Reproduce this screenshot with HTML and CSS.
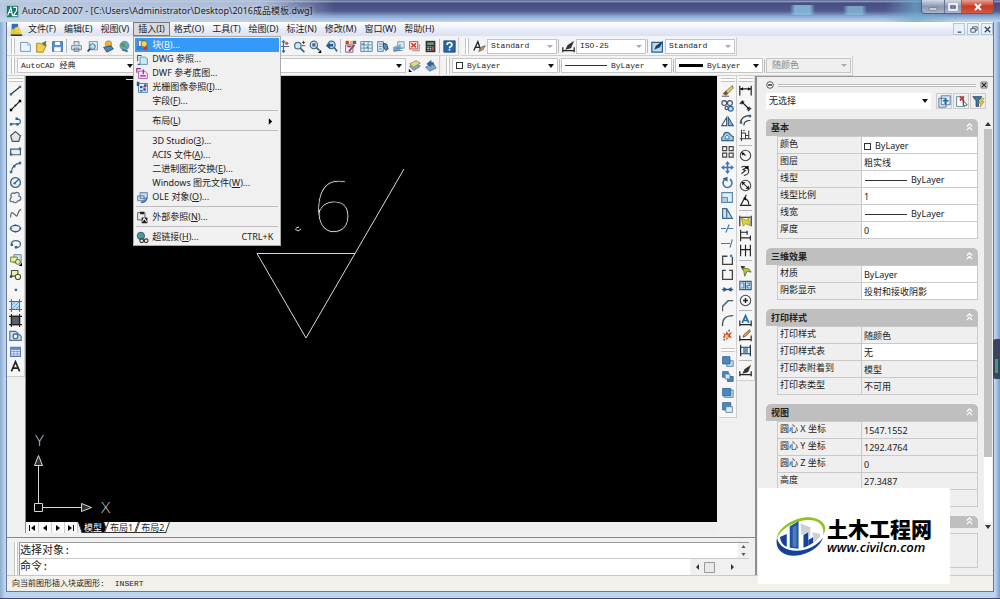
FILE: index.html
```
<!DOCTYPE html>
<html lang="zh-CN">
<head>
<meta charset="utf-8">
<title>AutoCAD 2007</title>
<link rel="stylesheet" href="styles.css">
</head>
<body>
<svg class="defs" aria-hidden="true">
  <symbol id="app" viewBox="0 0 16 16"><path fill="#177a68" d="M1 1h14v14H1z"/><path stroke="#fff" stroke-width="1.4" fill="none" d="M2 13 6 3l2 10M3 9h5M9 3h4v4l-4 6h5"/></symbol>
  <symbol id="dwg" viewBox="0 0 16 16"><path fill="#2f6fc0" d="M2 1h8v7H2z"/><path fill="#f0c62c" d="M1 8h8l6 7H1z"/><path fill="#f3d24a" d="m5 6 6-2 4 9-7-2z"/><path fill="#245" d="M1 14h14v2H1z"/></symbol>
  <symbol id="new" viewBox="0 0 16 16"><path fill="#e9f4fd" stroke="#5b87ad" d="M2 3h9l3 3v8H2z"/><path fill="#a9c9e4" d="M10 3v4h4z"/></symbol>
  <symbol id="open" viewBox="0 0 16 16"><path fill="#f3cf4a" stroke="#9a7b1c" d="M2 4h5l2 2h5l-4 9H2z"/><path fill="#3f8a42" d="m8 4 6-3-1 7z"/></symbol>
  <symbol id="save" viewBox="0 0 16 16"><path fill="#5b93cc" stroke="#2d5d92" d="M2 2h12v12H2z"/><path fill="#fff" d="M5 2h6v4H5zM4 9h8v5H4z"/></symbol>
  <symbol id="print" viewBox="0 0 16 16"><path fill="#dce5ee" stroke="#5b6f88" d="M5 6V2h6v4M2 7h12v5H2zM5 10h6v4H5z"/></symbol>
  <symbol id="preview" viewBox="0 0 16 16"><path fill="#eaf4fb" stroke="#557d9c" d="M4 2h10v10H4z"/><circle cx="8" cy="8" r="3.5" fill="#b8dcf2" stroke="#357"/><path stroke="#335" stroke-width="2" d="m5 11-3 3"/></symbol>
  <symbol id="publish" viewBox="0 0 16 16"><circle cx="8" cy="5" r="4" fill="#f0b32a" stroke="#996"/><path fill="#4b86bf" stroke="#345" d="m2 9 9-2 3 4-8 4z"/></symbol>
  <symbol id="globe" viewBox="0 0 16 16"><circle cx="8" cy="7" r="5.5" fill="#5fa9d8" stroke="#6a8296"/><path fill="#4f9d57" d="m5 3 4 1v4l-4 1-2-3zM9 9l3-2-1 4z"/><path stroke="#667" stroke-width="2" d="m5 12 7 2"/></symbol>
  <symbol id="block" viewBox="0 0 16 16"><path fill="#fff" stroke="#567" d="M3 2h8v7H3z"/><circle cx="10" cy="6" r="4" fill="#ecd85d" stroke="#555"/><path fill="#c93e2c" d="m7 13 7-5v6z"/><path fill="#2a7fbe" d="M1 9h6v4H1z"/></symbol>
  <symbol id="xref" viewBox="0 0 16 16"><path fill="#cfe8f7" stroke="#5283ab" d="M5 5h6l3 2v7H5z"/><path stroke="#24618f" stroke-width="1.3" fill="none" d="M2 10V3h5M2 14h3"/></symbol>
  <symbol id="dwf" viewBox="0 0 16 16"><path fill="#f7dcf1" stroke="#9c4b9e" d="M3 5h8l3 3v6H3z"/><path stroke="#7b308b" stroke-width="1.4" fill="none" d="M1 7V2h5M5 11h7M9 3v6"/></symbol>
  <symbol id="raster" viewBox="0 0 16 16"><path fill="#e8eff9" stroke="#3564a0" d="M3 3h11v11H3z"/><path fill="#2454a0" d="M1 1h3v5H1zM5 6h3v3H5zM9 9h3v3H9zM10 4h3v3h-3zM5 11h3v2H5z"/><path fill="#c03c32" d="M9 6h3v2H9z"/></symbol>
  <symbol id="ole" viewBox="0 0 16 16"><path fill="#c9ddec" stroke="#4b6f91" d="M5 2h9v7H5zM2 6h8v6H2z"/><path stroke="#3372a8" stroke-width="2" fill="none" d="M6 14c5 0 7-3 7-6"/></symbol>
  <symbol id="extref" viewBox="0 0 16 16"><path fill="#e7edf0" stroke="#444" d="M2 2h9v9H2z"/><path fill="#222" d="M5 1h5v3H5zM7 8h7v7H7z"/><path stroke="#fff" stroke-width="1.3" d="m8 13 2-4 3 4"/></symbol>
  <symbol id="link" viewBox="0 0 16 16"><circle cx="6" cy="6" r="4.5" fill="#4b9a9a" stroke="#246"/><circle cx="7" cy="12" r="2.3" fill="#eee" stroke="#333" stroke-width="1.4"/><circle cx="12.500" cy="12" r="2.3" fill="#eee" stroke="#333" stroke-width="1.4"/></symbol>
  <symbol id="pan" viewBox="0 0 16 16"><path stroke="#3c6c9d" stroke-width="1.5" fill="none" d="M8 1v14M1 8h14M6 3l2-2 2 2M6 13l2 2 2-2"/><circle cx="12" cy="4" r="2" fill="#d05d49"/></symbol>
  <symbol id="zoomrt" viewBox="0 0 16 16"><circle cx="6" cy="7" r="4" fill="#cfe8f6" stroke="#4c6f8c" stroke-width="1.5"/><path stroke="#4a5f78" stroke-width="2" d="m9 10 5 5"/><path stroke="#333" d="M11 3h4M13 1v4M11 7h4"/></symbol>
  <symbol id="zoomwin" viewBox="0 0 16 16"><circle cx="6" cy="6" r="4.5" fill="#cfe8f6" stroke="#4c6f8c" stroke-width="1.5"/><path fill="#486a8b" d="M4 4h4v4H4z"/><path stroke="#4a5f78" stroke-width="2" d="m9 9 4 4"/><path d="M15 12v4h-4z"/></symbol>
  <symbol id="zoomprev" viewBox="0 0 16 16"><circle cx="8" cy="6" r="4.5" fill="#b9d9ee" stroke="#4c6f8c" stroke-width="1.5"/><path stroke="#4a5f78" stroke-width="2" d="m11 9 4 5"/><path fill="#1f5b94" d="M1 7 6 3v2h4v3H6v3z"/></symbol>
  <symbol id="props" viewBox="0 0 16 16"><path fill="#d33" d="M2 1h4v4H2z"/><path fill="#e8c62a" d="M7 1h4v4H7z"/><path fill="#36a" d="M11 1h4v4h-4z"/><path fill="#f2f2fa" stroke="#557" d="M2 6h9v9H2z"/><path stroke="#a3355b" stroke-width="2" d="m6 14 7-8M4 8h5"/></symbol>
  <symbol id="grid" viewBox="0 0 16 16"><path fill="#e7f3fa" stroke="#496d8c" d="M1 2h14v12H1z"/><path stroke="#5186ad" fill="none" d="M5 2v12M10 2v12M1 6h14M1 10h14"/><path fill="#397" d="M3 4h2v2H3zM8 8h2v2H8z"/></symbol>
  <symbol id="palette" viewBox="0 0 16 16"><path fill="#d7e9f6" stroke="#3f6b93" d="M2 2h7v12H2z"/><path stroke="#3f6b93" d="M4 5h3M4 8h3M4 11h3"/><path fill="#578fbe" stroke="#234" d="m9 4 4 1 2 6-3 2-3-5z"/></symbol>
  <symbol id="sheets" viewBox="0 0 16 16"><path fill="#d7e5ee" stroke="#7692a6" d="M7 2h8v8H7z"/><path fill="#82aac8" d="m1 9 10-4-1 8-8 2z"/><path stroke="#4d7ea5" d="M2 13h11M4 10h9"/></symbol>
  <symbol id="markup" viewBox="0 0 16 16"><path fill="#fff" stroke="#d26464" stroke-width="1.5" d="M2 2h10v9H2z"/><path stroke="#cf3434" stroke-width="2" d="m4 4 6 5M10 4 4 9"/><path fill="none" stroke="#c99" stroke-width="1.5" d="M5 13h9V5"/></symbol>
  <symbol id="calc" viewBox="0 0 16 16"><path fill="#30343a" d="M2 1h12v14H2z"/><path fill="#5fae72" d="M4 3h8v3H4z"/><path fill="#eee" d="M4 8h2v1H4zM7 8h2v1H7zM4 10h2v1H4zM7 10h2v1H7zM4 12h2v1H4zM7 12h2v1H7z"/><path fill="#d55" d="M10 8h2v5h-2z"/></symbol>
  <symbol id="help" viewBox="0 0 16 16"><path fill="#2d669e" stroke="#1c4672" d="M1 1h14v14H1z"/><path fill="none" stroke="#fff" stroke-width="2" d="M5 6c0-4 6-4 6 0 0 2-3 2-3 4M8 11v2"/></symbol>
  <symbol id="textstyle" viewBox="0 0 16 16"><path stroke="#222" stroke-width="1.6" fill="none" d="M1 13 6 2l3 9M3 9h5"/><path fill="#c9a14c" stroke="#654" d="m7 14 3-5 5-2-3 5z"/></symbol>
  <symbol id="dimstyle" viewBox="0 0 16 16"><path stroke="#222" stroke-width="1.5" fill="none" d="M1 9v6M15 9v6M1 13h14"/><path fill="#333" d="m4 12 3-6 8-5-4 9z"/></symbol>
  <symbol id="tblstyle" viewBox="0 0 16 16"><path fill="#bcd9f0" stroke="#27639b" stroke-width="1.5" d="M1 3h13v12H1z"/><path fill="#28415c" d="m4 12 2-5 9-6-4 8z"/></symbol>
  <symbol id="layers" viewBox="0 0 16 16"><path fill="#89aac6" stroke="#568" d="m2 9 8-4 5 4-8 5z"/><path fill="#e3dc76" stroke="#886" d="m2 6 8-4 5 3-8 5z"/><path d="M1 12v4h4z"/></symbol>
  <symbol id="layerprev" viewBox="0 0 16 16"><path fill="#86a9c6" stroke="#456f92" d="m2 10 9-5 4 6-8 4z"/><path fill="#2e6293" d="M3 6 9 1v3h3v5c-2-3-3-2-3-2v3z"/></symbol>

  <symbol id="line" viewBox="0 0 16 16"><path stroke="#333" stroke-width="1.4" d="M3 12 13 4"/><path fill="#2d6d9d" d="M1 11h3v3H1zM12 2h3v3h-3z"/></symbol>
  <symbol id="xline" viewBox="0 0 16 16"><path stroke="#222" stroke-width="1.6" d="M2 14 14 2"/><path d="M1 12h3v3H1zM12 1h3v3h-3zM7 7h2v2H7z"/></symbol>
  <symbol id="pline" viewBox="0 0 16 16"><path stroke="#3c6785" stroke-width="1.4" fill="none" d="M2 11h9c4 0 4-6 0-6H9"/><path fill="#225f94" d="M1 10h3v3H1zM9 10h3v3H9zM8 3h3v3H8z"/></symbol>
  <symbol id="polygon" viewBox="0 0 16 16"><path fill="#dce6ec" stroke="#4b545c" stroke-width="1.5" d="m8 2 6 5-2 7H4L2 7z"/></symbol>
  <symbol id="rect" viewBox="0 0 16 16"><path fill="#e8eff3" stroke="#4b6070" stroke-width="1.5" d="M2 5h12v7H2z"/><path fill="#2e6d9d" d="M12 3h3v3h-3zM1 10h3v3H1z"/></symbol>
  <symbol id="arc" viewBox="0 0 16 16"><path stroke="#456" stroke-width="1.4" fill="none" d="M3 14C3 7 8 3 14 3"/><path fill="#2e6d9d" d="M1 12h3v3H1zM5 5h3v3H5zM12 1h3v3h-3z"/></symbol>
  <symbol id="circle" viewBox="0 0 16 16"><circle cx="8" cy="8" r="6" fill="#edf3f7" stroke="#455f73" stroke-width="1.6"/><path stroke="#27699e" stroke-width="1.6" d="m7 9 5-5"/><circle cx="7" cy="9" r="1.600" fill="#3777aa"/></symbol>
  <symbol id="cloud" viewBox="0 0 16 16"><path fill="#edf3f7" stroke="#54697a" stroke-width="1.4" d="M5 13c-4 1-5-3-2-5-2-4 1-7 4-5 3-3 7 0 5 3 4 1 3 6-1 6-1 3-5 3-6 1z"/></symbol>
  <symbol id="spline" viewBox="0 0 16 16"><path stroke="#5a6772" stroke-width="1.5" fill="none" d="M2 13c0-12 5-3 7-2s2-8 6-8"/></symbol>
  <symbol id="ellipse" viewBox="0 0 16 16"><ellipse cx="8" cy="8" rx="6" ry="3.8" fill="#e6f0f5" stroke="#3f5668" stroke-width="1.5"/><path fill="#1e5b89" d="M1 7h2v2H1zM13 7h2v2h-2zM7 3h2v2H7zM7 11h2v2H7z"/></symbol>
  <symbol id="ellarc" viewBox="0 0 16 16"><path fill="none" stroke="#516779" stroke-width="1.6" d="M3 9c-1-6 12-6 11 0 0 2-2 4-5 4"/><path fill="#246a9f" d="M2 8h3v3H2zM7 11h3v3H7z"/></symbol>
  <symbol id="insblk" viewBox="0 0 16 16"><path fill="#cde1ed" stroke="#678" d="M6 2h9v10H6z"/><path fill="#eef08d" stroke="#473" d="M2 5h8v6H2z"/><circle cx="11" cy="11" r="3" fill="#e8f0b3" stroke="#453"/><path d="M16 12v4h-4z"/></symbol>
  <symbol id="mkblk" viewBox="0 0 16 16"><path fill="#e8efb0" stroke="#454" stroke-width="1.3" d="M3 3h8v7H3z"/><circle cx="11" cy="11" r="3.2" fill="#f4f6cc" stroke="#453" stroke-width="1.3"/><path fill="#245" d="M1 9h3v3H1z"/></symbol>
  <symbol id="point" viewBox="0 0 16 16"><path fill="#36739d" d="M7 7h3v3H7z"/></symbol>
  <symbol id="hatch" viewBox="0 0 16 16"><path fill="#bcd9ee" stroke="#456d90" stroke-width="1.3" d="M3 3h10v10H3z"/><path stroke="#6a9dc8" d="m3 8 5-5M3 13 13 3M8 13l5-5"/><path stroke="#456d90" stroke-width="1.3" d="M3 0v3M3 13v3M13 0v3M13 13v3M0 3h3M13 3h3M0 13h3M13 13h3"/></symbol>
  <symbol id="grad" viewBox="0 0 16 16"><path fill="#57616c" stroke="#222" stroke-width="1.6" d="M3 3h10v10H3z"/><path stroke="#222" stroke-width="1.4" d="M3 0v16M13 0v16M0 3h16M0 13h16"/></symbol>
  <symbol id="region" viewBox="0 0 16 16"><path fill="#cbdfee" stroke="#4d7393" stroke-width="1.4" d="M1 3h7l7 6v5H1z"/><circle cx="8" cy="9" r="3" fill="#f3f7fa" stroke="#345c80" stroke-width="1.4"/></symbol>
  <symbol id="table" viewBox="0 0 16 16"><path fill="#eaf0ff" stroke="#5374bd" stroke-width="1.4" d="M2 3h12v11H2z"/><path fill="#6c87c7" d="M2 3h12v3H2z"/><path stroke="#7691cc" d="M6 4v10M10 4v10M2 8h12M2 11h12"/></symbol>
  <symbol id="mtext" viewBox="0 0 16 16"><path stroke="#222" stroke-width="2" fill="none" d="M3 14 8 2l5 12M5 10h6"/></symbol>

  <symbol id="erase" viewBox="0 0 16 16"><path fill="#e9d64f" stroke="#665" d="m6 9 8-7 1 3-7 7z"/><path fill="#7b5433" d="m2 12 4-4 3 4-3 2z"/><path stroke="#333" d="M1 15h9"/></symbol>
  <symbol id="copy" viewBox="0 0 16 16"><circle cx="4" cy="5" r="3" fill="#e3edf4" stroke="#3b5368" stroke-width="1.4"/><circle cx="11" cy="5" r="3" fill="none" stroke="#3b5368" stroke-width="1.4"/><circle cx="7" cy="11" r="2" fill="none" stroke="#3b5368" stroke-width="1.4"/><circle cx="12" cy="12" r="3" fill="#bfdcf1" stroke="#2e6291" stroke-width="1.4"/></symbol>
  <symbol id="mirror" viewBox="0 0 16 16"><path fill="#fff" stroke="#456" stroke-width="1.4" d="M7 3v10H1z"/><path fill="#8cb9dc" stroke="#29608f" stroke-width="1.4" d="M9 3v10h6z"/></symbol>
  <symbol id="offset" viewBox="0 0 16 16"><path fill="#a9cbe6" stroke="#31658f" stroke-width="1.4" d="M1 13V9c3 0 1-6 6-6s4 5 8 5v5z"/><path fill="#e5eff7" stroke="#31658f" d="M5 11c0-6 5-6 5 0z"/></symbol>
  <symbol id="array" viewBox="0 0 16 16"><path fill="none" stroke="#444" stroke-width="1.4" d="M2 2h5v5H2zM10 2h5v5h-5zM2 10h5v5H2zM10 10h5v5h-5z"/></symbol>
  <symbol id="move" viewBox="0 0 16 16"><path fill="#3a78b0" d="m8 0 3 4H9v3h3V5l4 3-4 3V9H9v3h2l-3 4-3-4h2V9H4v2L0 8l4-3v2h3V4H5z"/></symbol>
  <symbol id="rotate" viewBox="0 0 16 16"><path fill="none" stroke="#41769f" stroke-width="2" d="M5 4a5.500 5.500 0 1 0 6 0"/><path fill="#2c618c" d="m2 3 6-2v6z"/></symbol>
  <symbol id="scale" viewBox="0 0 16 16"><path fill="#e2edf5" stroke="#5c86a9" stroke-width="1.4" d="M1 2h13v12H1z"/><path fill="#afd0ea" stroke="#4a7ba5" d="M1 8h7v6H1z"/></symbol>
  <symbol id="stretch" viewBox="0 0 16 16"><path fill="#cfe1f0" stroke="#3e6587" stroke-width="1.4" d="M2 2h5l7 12H2zM7 3v10"/></symbol>
  <symbol id="trim" viewBox="0 0 16 16"><path stroke="#3e79a8" stroke-width="1.4" d="M0 8h6M9 8h6M6 13l4-10"/></symbol>
  <symbol id="extend" viewBox="0 0 16 16"><path stroke="#3e79a8" stroke-width="1.4" d="M0 8h5M5 8h6M11 13l3-10"/></symbol>
  <symbol id="breakpt" viewBox="0 0 16 16"><path fill="none" stroke="#444" stroke-width="1.6" d="M8 4H2v10h12V5"/><path fill="#4a86b5" d="M11 2h3v3h-3z"/></symbol>
  <symbol id="break" viewBox="0 0 16 16"><path fill="none" stroke="#444" stroke-width="1.6" d="M6 3H2v11h12V3h-4"/></symbol>
  <symbol id="join" viewBox="0 0 16 16"><path stroke="#27557c" stroke-width="1.6" d="M1 8h14"/><path fill="#27557c" d="m3 5 5 3-5 3zM13 5 8 8l5 3z"/></symbol>
  <symbol id="chamfer" viewBox="0 0 16 16"><path fill="none" stroke="#555" stroke-width="1.4" d="M2 15V9l7-7h6"/><path stroke="#3d7aae" stroke-width="1.8" d="m2 9 7-7"/></symbol>
  <symbol id="fillet" viewBox="0 0 16 16"><path fill="none" stroke="#47525b" stroke-width="1.6" d="M2 15C1 6 6 2 15 2"/></symbol>
  <symbol id="explode" viewBox="0 0 16 16"><path fill="#cb492e" d="m2 5 4 1 1-4 2 4 5-3-3 5 3 3-5-1-2 4-1-4-4 1 2-4z"/><path fill="#efc64b" d="M5 7h4v4H5z"/><path fill="#46678a" d="M9 1h2v2H9zM3 12h2v2H3z"/></symbol>
  <symbol id="order1" viewBox="0 0 16 16"><path fill="#c2dcf1" stroke="#4c7ba3" d="M7 7h8v7H7z"/><path fill="#4b87bd" stroke="#2e608e" d="M2 2h9v9H2z"/></symbol>
  <symbol id="order2" viewBox="0 0 16 16"><path fill="#4b87bd" stroke="#2e608e" d="M2 2h7v7H2zM8 8h7v6H8z"/><path fill="#d8e9f6" stroke="#4c7ba3" d="M5 5h6v6H5z"/></symbol>
  <symbol id="order3" viewBox="0 0 16 16"><path fill="#c2dcf1" stroke="#4c7ba3" d="M4 5h11v9H4z"/><path fill="#4b87bd" stroke="#2e608e" d="M2 3h10v9H2z"/></symbol>
  <symbol id="order4" viewBox="0 0 16 16"><path fill="#4b87bd" stroke="#2e608e" d="M2 2h10v9H2z"/><path fill="#e0eef9" stroke="#4c7ba3" d="M6 7h8v7H6z"/></symbol>

  <symbol id="dlin" viewBox="0 0 16 16"><path fill="none" stroke="#222" stroke-width="1.5" d="M1 2v12M15 2v12M2 6h12"/><path d="m1 6 4-2v4zM15 6l-4-2v4z"/></symbol>
  <symbol id="dali" viewBox="0 0 16 16"><path stroke="#222" stroke-width="1.5" d="m4 4 8 8M1 6l4-4M11 15l4-4"/><path d="M3 3h4L3 7zM13 13H9l4-4z"/></symbol>
  <symbol id="darc" viewBox="0 0 16 16"><path fill="none" stroke="#333" stroke-width="1.4" d="M2 11C2 5 7 2 13 2M6 14c0-4 3-6 8-6"/><path fill="#27699e" d="M1 9h3v3H1zM12 1h3v3h-3z"/></symbol>
  <symbol id="dord" viewBox="0 0 16 16"><path fill="none" stroke="#333" stroke-width="1.2" d="M3 1v14M1 12h14M3 5h5v7M8 8h4V2M12 8v4M5 2h2"/></symbol>
  <symbol id="drad" viewBox="0 0 16 16"><circle cx="8" cy="8" r="6.4" fill="#f5f5f5" stroke="#444" stroke-width="1.3"/><path stroke="#222" stroke-width="1.5" d="M8 8 4 5"/><path d="m3 4 4 1-3 3z"/></symbol>
  <symbol id="djog" viewBox="0 0 16 16"><path fill="none" stroke="#333" stroke-width="1.4" d="M3 4c5-3 9 0 9 4s-3 6-6 6M3 12l5-4-3-1 6-4"/><path d="m7 4 5-2-1 5z"/></symbol>
  <symbol id="ddia" viewBox="0 0 16 16"><circle cx="8" cy="8" r="6.4" fill="#f5f5f5" stroke="#444" stroke-width="1.3"/><path stroke="#222" stroke-width="1.3" d="m4 4 8 8"/><path d="M4 4h4L4 8zM12 12H8l4-4z"/></symbol>
  <symbol id="dang" viewBox="0 0 16 16"><path fill="none" stroke="#222" stroke-width="1.4" d="M9 1 2 14h13M6 6c4 0 6 3 6 7"/><path d="m5 5 4-1-1 4z"/></symbol>
  <symbol id="dquick" viewBox="0 0 16 16"><path stroke="#222" stroke-width="1.4" fill="none" d="M1 2v13M15 2v13M2 4h12"/><path fill="#e6d42c" stroke="#770" stroke-width=".7" d="m3 5 6 3 3-3 1 9-5-2-3 3z"/></symbol>
  <symbol id="dbase" viewBox="0 0 16 16"><path stroke="#222" stroke-width="1.4" fill="none" d="M2 1v14M2 4h8M10 2v5M2 11h12M14 8v6"/></symbol>
  <symbol id="dcont" viewBox="0 0 16 16"><path stroke="#222" stroke-width="1.4" fill="none" d="M2 1v14M8 1v14M14 1v14M2 7h12"/></symbol>
  <symbol id="leader" viewBox="0 0 16 16"><path fill="#2b2b2b" d="m2 2 6 1-4 4z"/><path fill="#c9c42f" stroke="#564" d="m4 5 8 1 3 4-5-1-3 6-1-6z"/></symbol>
  <symbol id="toler" viewBox="0 0 16 16"><path fill="#c8e0f3" stroke="#31678f" stroke-width="1.4" d="M1 3h14v10H1zM8 3v10"/><path fill="none" stroke="#31678f" d="M3 5h3v6H3M10 5h3v3h-3v3h3"/></symbol>
  <symbol id="center" viewBox="0 0 16 16"><circle cx="8" cy="8" r="6.4" fill="#f7f7f7" stroke="#444" stroke-width="1.3"/><path stroke="#222" stroke-width="1.800" d="M5 8h6M8 5v6"/></symbol>
  <symbol id="dedit" viewBox="0 0 16 16"><path stroke="#222" stroke-width="1.4" d="M1 8v7M15 8v7M1 13h14"/><path stroke="#246da5" stroke-width="2" fill="none" d="m4 11 4-9 4 9M5 8h6"/></symbol>
  <symbol id="dtedit" viewBox="0 0 16 16"><path stroke="#222" stroke-width="1.4" d="M1 8v7M15 8v7M1 13h14"/><path fill="#e5ae3d" stroke="#643" d="m5 10 1-3 7-6 1 2-6 6z"/></symbol>
  <symbol id="dupd" viewBox="0 0 16 16"><path stroke="#234" stroke-width="1.5" fill="none" d="M2 1v14M14 1v14M2 4h12M2 12h12"/><path fill="#5e96c3" d="M5 5h6v6H5z"/></symbol>
  <symbol id="selplus" viewBox="0 0 16 16"><path fill="#e0edf7" stroke="#3d6691" d="M1 4h9v11H1zM4 1h11v11H4z"/><path stroke="#246da5" stroke-width="2" d="M6 7h7M9 4v7"/></symbol>
  <symbol id="selobj" viewBox="0 0 16 16"><path fill="#fff" stroke="#478" d="M2 2h8v12H2z"/><path stroke="#d42b2b" stroke-width="2" d="m6 2 5 5M11 2 6 7"/><path stroke="#223" fill="#fff" d="m10 7 5 5-4 2z"/></symbol>
  <symbol id="qselect" viewBox="0 0 16 16"><path fill="#387bb0" stroke="#245" d="M1 2h11L8 7v7H5V7z"/><path fill="#e9ca23" stroke="#875" stroke-width=".6" d="m12 4-4 6h3l-1 5 5-7h-3l3-4z"/></symbol>
  <symbol id="chev" viewBox="0 0 10 10"><path fill="none" stroke="#fff" stroke-width="1.3" d="m2 5 3-3 3 3M2 9l3-3 3 3"/></symbol>
</svg>

<div class="window">
  <header class="titlebar">
    <svg class="ic"><use href="#app"/></svg>
    <h1 class="title">AutoCAD 2007 - [C:\Users\Administrator\Desktop\2016成品模板.dwg]</h1>
    <div class="winbtns">
      <button class="wb wb-min" aria-label="最小化"><svg viewBox="0 0 12 10"><path fill="#fff" stroke="#556" stroke-width=".6" d="M2 6h8v2H2z"/></svg></button>
      <button class="wb wb-max" aria-label="最大化"><svg viewBox="0 0 12 10"><path fill="none" stroke="#fff" stroke-width="1.6" d="M2 2h8v6H2z"/><path fill="none" stroke="#445" stroke-width=".6" d="M4 4h4v2H4z"/></svg></button>
      <button class="wb wb-close" aria-label="关闭"><svg viewBox="0 0 12 10"><path stroke="#fff" stroke-width="2" d="m3 2 6 6M9 2 3 8"/></svg></button>
    </div>
  </header>

  <div class="client">
    <nav class="menubar">
      <svg class="ic menu-ic"><use href="#dwg"/></svg>
      <button class="menu">文件(F)</button>
      <button class="menu">编辑(E)</button>
      <button class="menu">视图(V)</button>
      <div class="menu-open">
        <button class="menu active" aria-expanded="true">插入(I)</button>
        <div class="dropdown" role="menu">
          <button class="mi sel" role="menuitem"><svg class="ic"><use href="#block"/></svg><span>块(<u>B</u>)...</span></button>
          <button class="mi" role="menuitem"><svg class="ic"><use href="#xref"/></svg><span>DWG 参照...</span></button>
          <button class="mi" role="menuitem"><svg class="ic"><use href="#dwf"/></svg><span>DWF 参考底图...</span></button>
          <button class="mi" role="menuitem"><svg class="ic"><use href="#raster"/></svg><span>光栅图像参照(<u>I</u>)...</span></button>
          <button class="mi" role="menuitem"><i class="ic"></i><span>字段(<u>F</u>)...</span></button>
          <hr class="msep">
          <button class="mi" role="menuitem"><i class="ic"></i><span>布局(<u>L</u>)</span><svg class="sub" viewBox="0 0 6 8"><path d="m1 0 4 4-4 4z"/></svg></button>
          <hr class="msep">
          <button class="mi" role="menuitem"><i class="ic"></i><span>3D Studio(<u>3</u>)...</span></button>
          <button class="mi" role="menuitem"><i class="ic"></i><span>ACIS 文件(<u>A</u>)...</span></button>
          <button class="mi" role="menuitem"><i class="ic"></i><span>二进制图形交换(<u>E</u>)...</span></button>
          <button class="mi" role="menuitem"><i class="ic"></i><span>Windows 图元文件(<u>W</u>)...</span></button>
          <button class="mi" role="menuitem"><svg class="ic"><use href="#ole"/></svg><span>OLE 对象(<u>O</u>)...</span></button>
          <hr class="msep">
          <button class="mi" role="menuitem"><svg class="ic"><use href="#extref"/></svg><span>外部参照(<u>N</u>)...</span></button>
          <hr class="msep">
          <button class="mi" role="menuitem"><svg class="ic"><use href="#link"/></svg><span>超链接(<u>H</u>)...</span><span class="key">CTRL+K</span></button>
        </div>
      </div>
      <button class="menu">格式(O)</button>
      <button class="menu">工具(T)</button>
      <button class="menu">绘图(D)</button>
      <button class="menu">标注(N)</button>
      <button class="menu">修改(M)</button>
      <button class="menu">窗口(W)</button>
      <button class="menu">帮助(H)</button>
      <div class="mdi">
        <button class="mb" aria-label="最小化文档"><svg viewBox="0 0 10 10"><path stroke="#456" stroke-width="1.4" d="M3 8h4"/></svg></button>
        <button class="mb" aria-label="还原文档"><svg viewBox="0 0 10 10"><path fill="none" stroke="#456" d="M4 4V2h5v4H7M2 4h5v4H2z"/></svg></button>
        <button class="mb" aria-label="关闭文档"><svg viewBox="0 0 10 10"><path stroke="#345" stroke-width="1.4" d="m2 2 6 6M8 2 2 8"/></svg></button>
      </div>
    </nav>

    <div class="barrow">
      <div class="bar">
        <i class="grip"></i>
        <button class="tb" aria-label="新建"><svg class="ic"><use href="#new"/></svg></button>
        <button class="tb" aria-label="打开"><svg class="ic"><use href="#open"/></svg></button>
        <button class="tb" aria-label="保存"><svg class="ic"><use href="#save"/></svg></button>
        <i class="vsep"></i>
        <button class="tb" aria-label="打印"><svg class="ic"><use href="#print"/></svg></button>
        <button class="tb" aria-label="打印预览"><svg class="ic"><use href="#preview"/></svg></button>
        <button class="tb" aria-label="发布"><svg class="ic"><use href="#publish"/></svg></button>
        <button class="tb" aria-label="三维 DWF"><svg class="ic"><use href="#globe"/></svg></button>
        <div class="under-menu"></div>
        <button class="tb" aria-label="平移"><svg class="ic"><use href="#pan"/></svg></button>
        <button class="tb" aria-label="实时缩放"><svg class="ic"><use href="#zoomrt"/></svg></button>
        <button class="tb" aria-label="窗口缩放"><svg class="ic"><use href="#zoomwin"/></svg></button>
        <button class="tb" aria-label="缩放上一个"><svg class="ic"><use href="#zoomprev"/></svg></button>
        <i class="vsep"></i>
        <button class="tb" aria-label="特性"><svg class="ic"><use href="#props"/></svg></button>
        <button class="tb" aria-label="设计中心"><svg class="ic"><use href="#grid"/></svg></button>
        <button class="tb" aria-label="工具选项板"><svg class="ic"><use href="#palette"/></svg></button>
        <button class="tb" aria-label="图纸集"><svg class="ic"><use href="#sheets"/></svg></button>
        <button class="tb" aria-label="标记集"><svg class="ic"><use href="#markup"/></svg></button>
        <button class="tb" aria-label="计算器"><svg class="ic"><use href="#calc"/></svg></button>
        <i class="vsep"></i>
        <button class="tb" aria-label="帮助"><svg class="ic"><use href="#help"/></svg></button>
      </div>
      <div class="bar">
        <i class="grip"></i>
        <button class="tb" aria-label="文字样式"><svg class="ic"><use href="#textstyle"/></svg></button>
        <div class="combo w-style pale"><select aria-label="文字样式"><option>Standard</option></select></div>
        <i class="vsep"></i>
        <button class="tb" aria-label="标注样式"><svg class="ic"><use href="#dimstyle"/></svg></button>
        <div class="combo w-style pale"><select aria-label="标注样式"><option>ISO-25</option></select></div>
        <i class="vsep"></i>
        <button class="tb" aria-label="表格样式"><svg class="ic"><use href="#tblstyle"/></svg></button>
        <div class="combo w-style pale"><select aria-label="表格样式"><option>Standard</option></select></div>
      </div>
    </div>

    <div class="barrow">
      <div class="bar">
        <i class="grip"></i>
        <div class="combo w-space"><select aria-label="工作空间"><option>AutoCAD 经典</option></select></div>
        <div class="combo w-layer"><select aria-label="图层"><option>粗实线</option></select></div>
        <button class="tb" aria-label="图层状态"><svg class="ic"><use href="#layers"/></svg></button>
        <button class="tb" aria-label="上一个图层"><svg class="ic"><use href="#layerprev"/></svg></button>
      </div>
      <div class="bar">
        <i class="grip"></i>
        <div class="combo w-color"><i class="swatch"></i><select aria-label="颜色"><option>ByLayer</option></select></div>
        <i class="vsep"></i>
        <div class="combo w-ltype"><i class="rule"></i><select aria-label="线型"><option>ByLayer</option></select></div>
        <i class="vsep"></i>
        <div class="combo w-lwt"><i class="rule thick"></i><select aria-label="线宽"><option>ByLayer</option></select></div>
        <i class="vsep"></i>
        <div class="combo w-plot off pale"><select aria-label="打印样式" disabled><option>随颜色</option></select></div>
      </div>
    </div>

    <div class="main">
      <div class="left">
        <div class="work">
          <div class="vbar">
            <i class="hgrip"></i>
            <button class="vt" aria-label="直线"><svg class="ic"><use href="#line"/></svg></button>
            <button class="vt" aria-label="构造线"><svg class="ic"><use href="#xline"/></svg></button>
            <button class="vt" aria-label="多段线"><svg class="ic"><use href="#pline"/></svg></button>
            <button class="vt" aria-label="正多边形"><svg class="ic"><use href="#polygon"/></svg></button>
            <button class="vt" aria-label="矩形"><svg class="ic"><use href="#rect"/></svg></button>
            <button class="vt" aria-label="圆弧"><svg class="ic"><use href="#arc"/></svg></button>
            <button class="vt" aria-label="圆"><svg class="ic"><use href="#circle"/></svg></button>
            <button class="vt" aria-label="修订云线"><svg class="ic"><use href="#cloud"/></svg></button>
            <button class="vt" aria-label="样条曲线"><svg class="ic"><use href="#spline"/></svg></button>
            <button class="vt" aria-label="椭圆"><svg class="ic"><use href="#ellipse"/></svg></button>
            <button class="vt" aria-label="椭圆弧"><svg class="ic"><use href="#ellarc"/></svg></button>
            <button class="vt" aria-label="插入块"><svg class="ic"><use href="#insblk"/></svg></button>
            <button class="vt" aria-label="创建块"><svg class="ic"><use href="#mkblk"/></svg></button>
            <button class="vt" aria-label="点"><svg class="ic"><use href="#point"/></svg></button>
            <button class="vt" aria-label="图案填充"><svg class="ic"><use href="#hatch"/></svg></button>
            <button class="vt" aria-label="渐变色"><svg class="ic"><use href="#grad"/></svg></button>
            <button class="vt" aria-label="面域"><svg class="ic"><use href="#region"/></svg></button>
            <button class="vt" aria-label="表格"><svg class="ic"><use href="#table"/></svg></button>
            <button class="vt" aria-label="多行文字"><svg class="ic"><use href="#mtext"/></svg></button>
          </div>

          <div class="drawing">
            <div class="canvas">
              <svg class="sheet" aria-label="图形">
                <path class="ln" d="M231 177.500H329M231 177.500 280 262 378 93"/>
                <path class="ln" d="M269 153l3 2 3-2M270 152l3-1M100 3.500h8"/>
                <text class="num" x="287" y="156">6</text>
              </svg>
              <svg class="ucs" viewBox="0 0 84 90">
                <path class="ln" d="M4.500 73.500h8v8h-8zM8.500 73.500V35M12.500 77.500H52"/>
                <path class="ln head" d="m8.500 25.500 4 10h-8zM61.500 77.500l-10-4v8z"/>
                <text class="axis" x="5" y="16">Y</text>
                <text class="axis" x="71" y="83">X</text>
              </svg>
            </div>
            <div class="tabs">
              <button class="nav" aria-label="第一个"><svg viewBox="0 0 8 8"><path d="M1 1h1v6H1zM7 1v6L3 4z"/></svg></button>
              <button class="nav" aria-label="上一个"><svg viewBox="0 0 8 8"><path d="M6 1v6L2 4z"/></svg></button>
              <button class="nav" aria-label="下一个"><svg viewBox="0 0 8 8"><path d="M2 1v6l4-3z"/></svg></button>
              <button class="nav" aria-label="最后一个"><svg viewBox="0 0 8 8"><path d="M1 1v6l4-3zM6 1h1v6H6z"/></svg></button>
              <button class="tab on">模型</button>
              <button class="tab">布局1</button>
              <button class="tab">布局2</button>
            </div>
          </div>

          <div class="vbar mod">
            <i class="hgrip"></i>
            <button class="vt" aria-label="删除"><svg class="ic"><use href="#erase"/></svg></button>
            <button class="vt" aria-label="复制"><svg class="ic"><use href="#copy"/></svg></button>
            <button class="vt" aria-label="镜像"><svg class="ic"><use href="#mirror"/></svg></button>
            <button class="vt" aria-label="偏移"><svg class="ic"><use href="#offset"/></svg></button>
            <button class="vt" aria-label="阵列"><svg class="ic"><use href="#array"/></svg></button>
            <button class="vt" aria-label="移动"><svg class="ic"><use href="#move"/></svg></button>
            <button class="vt" aria-label="旋转"><svg class="ic"><use href="#rotate"/></svg></button>
            <button class="vt" aria-label="缩放"><svg class="ic"><use href="#scale"/></svg></button>
            <button class="vt" aria-label="拉伸"><svg class="ic"><use href="#stretch"/></svg></button>
            <button class="vt" aria-label="修剪"><svg class="ic"><use href="#trim"/></svg></button>
            <button class="vt" aria-label="延伸"><svg class="ic"><use href="#extend"/></svg></button>
            <button class="vt" aria-label="打断于点"><svg class="ic"><use href="#breakpt"/></svg></button>
            <button class="vt" aria-label="打断"><svg class="ic"><use href="#break"/></svg></button>
            <button class="vt" aria-label="合并"><svg class="ic"><use href="#join"/></svg></button>
            <button class="vt" aria-label="倒角"><svg class="ic"><use href="#chamfer"/></svg></button>
            <button class="vt" aria-label="圆角"><svg class="ic"><use href="#fillet"/></svg></button>
            <button class="vt" aria-label="分解"><svg class="ic"><use href="#explode"/></svg></button>
            <i class="hgrip gap"></i>
            <button class="vt" aria-label="前置"><svg class="ic"><use href="#order1"/></svg></button>
            <button class="vt" aria-label="后置"><svg class="ic"><use href="#order2"/></svg></button>
            <button class="vt" aria-label="置于对象之上"><svg class="ic"><use href="#order3"/></svg></button>
            <button class="vt" aria-label="置于对象之下"><svg class="ic"><use href="#order4"/></svg></button>
          </div>

          <div class="vbar dim">
            <i class="hgrip"></i>
            <button class="vt" aria-label="线性"><svg class="ic"><use href="#dlin"/></svg></button>
            <button class="vt" aria-label="对齐"><svg class="ic"><use href="#dali"/></svg></button>
            <button class="vt" aria-label="弧长"><svg class="ic"><use href="#darc"/></svg></button>
            <button class="vt" aria-label="坐标"><svg class="ic"><use href="#dord"/></svg></button>
            <i class="hsep"></i>
            <button class="vt" aria-label="半径"><svg class="ic"><use href="#drad"/></svg></button>
            <button class="vt" aria-label="折弯"><svg class="ic"><use href="#djog"/></svg></button>
            <button class="vt" aria-label="直径"><svg class="ic"><use href="#ddia"/></svg></button>
            <button class="vt" aria-label="角度"><svg class="ic"><use href="#dang"/></svg></button>
            <i class="hsep"></i>
            <button class="vt" aria-label="快速标注"><svg class="ic"><use href="#dquick"/></svg></button>
            <button class="vt" aria-label="基线"><svg class="ic"><use href="#dbase"/></svg></button>
            <button class="vt" aria-label="连续"><svg class="ic"><use href="#dcont"/></svg></button>
            <i class="hsep"></i>
            <button class="vt" aria-label="快速引线"><svg class="ic"><use href="#leader"/></svg></button>
            <button class="vt" aria-label="公差"><svg class="ic"><use href="#toler"/></svg></button>
            <button class="vt" aria-label="圆心标记"><svg class="ic"><use href="#center"/></svg></button>
            <i class="hsep"></i>
            <button class="vt" aria-label="编辑标注"><svg class="ic"><use href="#dedit"/></svg></button>
            <button class="vt" aria-label="编辑标注文字"><svg class="ic"><use href="#dtedit"/></svg></button>
            <button class="vt" aria-label="标注更新"><svg class="ic"><use href="#dupd"/></svg></button>
            <i class="hsep"></i>
            <button class="vt" aria-label="标注样式"><svg class="ic"><use href="#dimstyle"/></svg></button>
          </div>
        </div>

        <div class="command">
          <i class="grip"></i>
          <div class="cmdbox">
            <div class="hist"><span>选择对象:</span>
              <svg class="vscroll" viewBox="0 0 10 15"><path fill="#555" d="m5 2 2 3H3zM5 13l2-3H3z"/></svg>
            </div>
            <div class="prompt">
              <label for="cmd">命令:</label><input id="cmd" type="text">
              <svg class="hscroll" viewBox="0 0 59 14"><path fill="#333" d="M9 4v6L6 7zM41 4v6l3-3z"/><path fill="#e9e9e9" stroke="#999" d="M14.500 2.500h10v10h-10z"/></svg>
            </div>
          </div>
        </div>
      </div>

      <aside class="props">
        <div class="phead">
          <button class="pb" aria-label="折叠"><svg viewBox="0 0 8 8"><circle cx="4" cy="4" r="3.300" fill="#fff" stroke="#555"/><path stroke="#222" stroke-width="1.400" d="M2 4h4"/></svg></button>
          <i class="pgrip"></i>
          <button class="pb" aria-label="关闭"><svg viewBox="0 0 8 8"><path fill="#fff" stroke="#777" d="M1 1h6v6H1z"/><path stroke="#222" stroke-width="1.400" d="m2 2 4 4M6 2 2 6"/></svg></button>
        </div>
        <div class="psel">
          <div class="combo pick"><select aria-label="选择"><option>无选择</option></select></div>
          <button class="sq" aria-label="切换 PICKADD"><svg class="ic"><use href="#selplus"/></svg></button>
          <button class="sq" aria-label="选择对象"><svg class="ic"><use href="#selobj"/></svg></button>
          <button class="sq" aria-label="快速选择"><svg class="ic"><use href="#qselect"/></svg></button>
        </div>
        <div class="pbody">
          <div class="groups">
            <section class="group">
              <h2>基本<svg class="chev"><use href="#chev"/></svg></h2>
              <table>
                <tr><th>颜色</th><td><i class="swatch"></i>ByLayer</td></tr>
                <tr><th>图层</th><td>粗实线</td></tr>
                <tr><th>线型</th><td><i class="rule"></i>ByLayer</td></tr>
                <tr><th>线型比例</th><td>1</td></tr>
                <tr><th>线宽</th><td><i class="rule"></i>ByLayer</td></tr>
                <tr><th>厚度</th><td>0</td></tr>
              </table>
            </section>
            <section class="group">
              <h2>三维效果<svg class="chev"><use href="#chev"/></svg></h2>
              <table>
                <tr><th>材质</th><td>ByLayer</td></tr>
                <tr><th>阴影显示</th><td>投射和接收阴影</td></tr>
              </table>
            </section>
            <section class="group">
              <h2>打印样式<svg class="chev"><use href="#chev"/></svg></h2>
              <table>
                <tr><th>打印样式</th><td class="ro">随颜色</td></tr>
                <tr><th>打印样式表</th><td>无</td></tr>
                <tr><th>打印表附着到</th><td class="ro">模型</td></tr>
                <tr><th>打印表类型</th><td class="ro">不可用</td></tr>
              </table>
            </section>
            <section class="group">
              <h2>视图<svg class="chev"><use href="#chev"/></svg></h2>
              <table>
                <tr><th>圆心 X 坐标</th><td class="ro">1547.1552</td></tr>
                <tr><th>圆心 Y 坐标</th><td class="ro">1292.4764</td></tr>
                <tr><th>圆心 Z 坐标</th><td class="ro">0</td></tr>
                <tr><th>高度</th><td class="ro">27.3487</td></tr>
                <tr><th></th><td class="ro"></td></tr>
              </table>
            </section>
            <div class="group last"><svg class="chev"><use href="#chev"/></svg></div>
            <div class="hint"></div>
          </div>
          <div class="scroll">
            <svg viewBox="0 0 8 8"><path fill="#333" d="m4 2 3 4H1z"/></svg>
            <i class="thumb"></i><i class="track"></i>
            <svg viewBox="0 0 8 8"><path fill="#333" d="m4 6 3-4H1z"/></svg>
          </div>
        </div>
      </aside>
    </div>

    <footer class="status"><span>向当前图形插入块或图形:</span><span>INSERT</span></footer>
  </div>

  <div class="gadget"></div>
  <a class="badge" href="#">
    <svg class="logo" viewBox="0 0 52 42">
      <path fill="#8fc31f" d="M2 24C3 7 38-7 50 9c2 4 1 8-1 11C51 8 42 3 30 5 17 7 5 15 2 24z"/>
      <path fill="#164391" d="M2 23c-3 14 10 21 25 17 11-3 19-9 22-17-7 8-16 13-27 13C11 36 4 31 2 23z"/>
      <path fill="#1d55a2" d="m15 11 9-5v28l-9-1z"/><path fill="#4d7dbb" d="m18 12 4-2v22h-4z"/>
      <path fill="#164391" d="m5 22 7-3v13c-3-1-6-4-7-10zM29 20l5-3v14l-5 2z"/>
      <path fill="#164391" d="m34 25 5-3v6l-5 3z"/>
      <path fill="#ccd0d4" d="m26 8 10 4v12l-2-7-7 3zM38 17l8 2v3l-6 5z"/>
    </svg>
    <span class="brand"><strong>土木工程网</strong><em>www.civilcn.com</em></span>
  </a>
</div>
</body>
</html>
```
FILE: styles.css
```
* { box-sizing: border-box; }
html, body { margin: 0; height: 100%; }
body {
  font: 9px/14px "Noto Sans", "Noto Sans CJK SC", sans-serif;
  color: #222;
}
button, select, input { font: inherit; color: inherit; margin: 0; padding: 0; border: 0; background: none; }
button { display: flex; align-items: center; justify-content: center; white-space: nowrap; }
select { appearance: none; flex: 1; min-width: 0; outline: 0; opacity: 1; }
i { display: block; flex: none; }
.defs { position: absolute; width: 0; height: 0; }
.ic { width: 13px; height: 13px; flex: none; display: block; }

.window {
  position: relative;
  display: flex;
  flex-direction: column;
  min-height: 100vh;
  padding: 0 6px 6px;
  background: linear-gradient(90deg, #8cabd0, #bdd5f0 5px, #bdd5f0 calc(100% - 5px), #7d9dc8);
  border-bottom: 1px solid #3c4670;
}

/* title bar */
.titlebar {
  display: flex;
  align-items: center;
  gap: 3px;
  height: 22px;
  margin: 0 -6px;
  padding-left: 6px;
  background:
    linear-gradient(90deg, rgba(196,213,232,.9), rgba(190,206,228,.85) 260px, rgba(150,165,200,0) 335px),
    linear-gradient(90deg, transparent 790px, rgba(140,195,225,.8) 795px, rgba(140,195,225,.8) 810px, transparent 815px) 0 5px / 100% 10px no-repeat,
    linear-gradient(90deg, transparent 843px, rgba(140,195,225,.7) 848px, rgba(140,195,225,.7) 862px, transparent 867px) 0 6px / 100% 9px no-repeat,
    linear-gradient(90deg, transparent 885px, rgba(110,170,200,.7) 915px, transparent 960px),
    linear-gradient(#30385f 0, #9eb3d6 1px, #474c80 3px, #505a8c 11px, #86a4cf 16px, #b9d2ee 21px);
}
.title { margin: 0 auto 0 0; font-size: 9px; font-weight: 400; color: #222; text-shadow: 0 0 4px #fff; }
.winbtns { display: flex; align-self: flex-start; margin-right: 6px; height: 14px; border: 1px solid #53627f; border-top: 0; border-radius: 0 0 4px 4px; overflow: hidden; }
.wb { width: 23px; background: linear-gradient(#d2d9e5, #8b98b3 50%, #a9b5ca); border-right: 1px solid #65728d; }
.wb svg { width: 12px; height: 10px; }
.wb-max { width: 17px; }
.wb-close { width: 31px; border: 0; background: linear-gradient(#e5a293, #c63a26 50%, #d6593f); }

.client { flex: 1; display: flex; flex-direction: column; background: #f0f0f0; border: solid #66799b; border-width: 0 1px 1px; }

/* menu bar */
.menubar { display: flex; align-items: center; height: 15px; background: linear-gradient(#fff, #e9edf8 50%, #dbe1f0); border-bottom: 1px solid #eef1f8; }
.menu-ic { margin: 0 1px 0 3px; }
.menu { height: 14px; padding: 0 4px; }
.menu.active { background: #d8dade; border: 1px solid #777b84; }
.menu-open { position: relative; }
.mdi { display: flex; gap: 2px; margin-left: auto; }
.mb { width: 12px; height: 12px; background: #e9f1fb; border: 1px solid #b4c5da; }
.mb svg { width: 9px; height: 9px; }
.dropdown {
  position: absolute;
  z-index: 5;
  top: 14px;
  left: 0;
  width: 148px;
  padding: 1px;
  background: #f0f0f0;
  border: 1px solid #aaa;
}
.mi { width: 100%; height: 14px; padding: 0 6px 0 1px; gap: 3px; justify-content: flex-start; }
.mi.sel { background: #3399fa; color: #fff; }
.key, .sub { margin-left: auto; }
.sub { width: 5px; height: 7px; }
.msep { height: 1px; margin: 2px 1px 3px; border: 0; background: #bdbdbd; }

/* tool bars */
.barrow { display: flex; height: 19px; gap: 2px; }
.barrow + .barrow { height: 20px; }
.bar { display: flex; align-items: center; padding: 0 1px 0 2px; border: solid #cfcfcf; border-width: 0 1px 1px 0; background: #f4f4f4; }
.grip { width: 4px; align-self: stretch; margin: 1px 2px; border: solid #c4c4c4; border-width: 0 1px; background: #fff; }
.tb { width: 16px; height: 16px; }
.vsep { width: 1px; height: 14px; margin: 0 1px; background: #bbb; }
.under-menu { width: 143px; }
.combo { display: flex; align-items: center; height: 15px; background: #fff; border: 1px solid #c5c5c5; padding: 0 3px; font: 8px/12px "Liberation Mono", "Noto Sans CJK SC", monospace; }
.combo::after { content: ""; border: solid transparent; border-width: 4px 3px 0; border-top-color: #111; }
.combo.pale::after { border-width: 3px 3px 0; border-top-color: #aaa; }
.combo.off { background: #efefef; color: #888; font-size: 9px; }
.w-style { width: 70px; }
.w-space { width: 120px; padding-left: 3px; }
.w-layer { width: 269px; }
.w-color { width: 106px; }
.w-ltype { width: 111px; }
.w-lwt { width: 88px; }
.w-plot { width: 85px; padding-left: 5px; }
.swatch { width: 7px; height: 7px; margin-right: 4px; border: 1px solid #333; background: #fff; }
.rule { width: 42px; height: 1px; margin-right: 4px; background: #333; }
.rule.thick { width: 24px; height: 3px; background: #000; }

/* work area */
.main { flex: 1; display: flex; }
.left { flex: 1; min-width: 0; display: flex; flex-direction: column; border-right: 2px solid #8f8f8f; }
.work { flex: 1; display: flex; min-height: 0; }
.vbar { display: flex; flex-direction: column; align-items: center; align-self: flex-start; width: 18px; padding-bottom: 2px; background: #f6f6f6; border: solid #cfcfcf; border-width: 0 1px 1px 0; }
.vt { width: 16px; height: 15px; flex: none; }
.vbar:not(.dim) .vt:nth-child(3n) { margin-bottom: 1px; }
.mod { margin-left: 2px; }
.hgrip { width: 14px; height: 4px; margin: 2px 0 1px; border: solid #c4c4c4; border-width: 1px 0; background: #fff; }
.hgrip.gap { margin: 4px 0 2px; }
.hsep { width: 13px; height: 1px; margin: 2px 0; background: #b5b5b5; }
.drawing { flex: 1; min-width: 0; display: flex; flex-direction: column; border-left: 1px solid #888; }
.canvas { position: relative; flex: 1; display: flex; align-items: flex-end; padding: 0 0 2px 4px; background: #000; }
.sheet { position: absolute; inset: 0; width: 100%; height: 100%; }
.ucs { width: 84px; height: 90px; }
.ln { fill: none; stroke: #d8d8d8; stroke-width: 1; }
.head { fill: #333; }
.num { font: 100 70px "Noto Sans", sans-serif; fill: #eee; stroke: #000; stroke-width: 1; }
.axis { font: 300 15px Lato, sans-serif; fill: #ddd; }
.tabs { display: flex; height: 11px; background: #eee; }
.nav { width: 13px; border-right: 1px solid #ccc; background: #fafafa; }
.nav svg { width: 8px; height: 8px; }
.tab { position: relative; z-index: 1; height: 11px; padding: 0 4px; line-height: 11px; }
.tab::before { content: ""; position: absolute; z-index: -1; inset: 0; background: #fff; border: solid #333; border-width: 0 1px 1px; transform: skewX(-20deg); }
.tab.on { margin-left: 2px; color: #fff; }
.tab.on::before { background: #000; transform: skewX(20deg); }

.command { display: flex; margin-top: 4px; padding: 4px 6px 0 5px; border-top: 1px solid #888; font: 11px/14px "Liberation Mono", "Noto Sans CJK SC", monospace; }
.command .grip { margin: 0 1px 0 2px; }
.cmdbox { flex: 1; border: 1px solid #999; border-right: 0; border-width: 1px 0 0 1px; }
.hist, .prompt { display: flex; align-items: center; height: 16px; background: #fff; }
.hist { border-bottom: 1px solid #ccc; }
.vscroll { width: 11px; height: 15px; margin-left: auto; background: #f0f0f0; }
.prompt input { flex: 1; min-width: 0; outline: 0; }
.hscroll { width: 59px; height: 16px; background: #f0f0f0; }

/* properties */
.props { width: 236px; padding: 4px 1px 0 9px; background: #efefef; border-top: 1px solid #999; }
.phead { display: flex; align-items: center; gap: 4px; padding-right: 4px; }
.pb svg { width: 8px; height: 8px; display: block; }
.pgrip { flex: 1; height: 3px; border: solid #bbb; border-width: 1px 0; background: #fff; }
.psel { display: flex; align-items: center; gap: 1px; margin: 4px 6px 10px 0; }
.pick { flex: 1; height: 16px; margin-right: 4px; border-color: #fff; padding: 0 2px; font: inherit; }
.sq { width: 16px; height: 16px; border: 1px solid #ccc; }
.pbody { display: flex; gap: 6px; }
.groups { flex: 1; }
.group { margin-bottom: 9px; }
.group h2, .last { display: flex; align-items: center; justify-content: space-between; height: 17px; margin-top: 0; margin-bottom: 0; padding: 0 4px 0 5px; font-size: 9px; background: #bfbfbf; border-radius: 5px 5px 0 0; }
.last { height: 12px; margin-bottom: 5px; justify-content: flex-end; }
.chev { width: 9px; height: 9px; margin-bottom: 3px; }
table { width: calc(100% - 11px); margin-left: 11px; border-collapse: collapse; table-layout: fixed; }
th, td { height: 17px; padding: 0 2px; line-height: 12px; font-weight: 400; text-align: left; border: 1px solid #c9c9c9; }
th { width: 84px; padding-bottom: 3px; }
td { padding-top: 1px; background: #fff; }
td.ro { background: #efefef; }
td .swatch, td .rule { display: inline-block; vertical-align: middle; }
td .rule { margin-left: 1px; }
.hint { height: 35px; margin-left: 11px; border: 1px solid #c9c9c9; }
.scroll { width: 8px; height: 413px; display: flex; flex-direction: column; }
.scroll svg { height: 10px; }
.thumb { flex: 5; background: #c2c2c2; }
.track { flex: 1; background: #fff; }

.status { display: flex; align-items: center; gap: 10px; height: 16px; padding-left: 5px; border-top: 1px solid #c9c9c9; background: #f1f0ea; font: 8px/12px "Liberation Mono", "Noto Sans CJK SC", monospace; }

.gadget { position: absolute; right: 0; top: 339px; width: 7px; height: 40px; border-radius: 3px 0 0 3px; background: linear-gradient(90deg, transparent 2px, #3f9a86 2px, #3f9a86 5px, transparent 5px) 0 20px / 7px 14px no-repeat, #38455e; }
.badge { position: absolute; right: 50px; bottom: 14px; width: 192px; height: 96px; display: flex; align-items: center; gap: 1px; padding-left: 17px; background: #fff; color: #000; text-decoration: none; }
.logo { width: 51px; height: 42px; }
.brand { display: flex; flex-direction: column; }
.brand strong { font: 900 21px/22px "Noto Sans CJK SC", sans-serif; }
.brand em { font: italic 600 13px/16px "Open Sans", sans-serif; }
```
